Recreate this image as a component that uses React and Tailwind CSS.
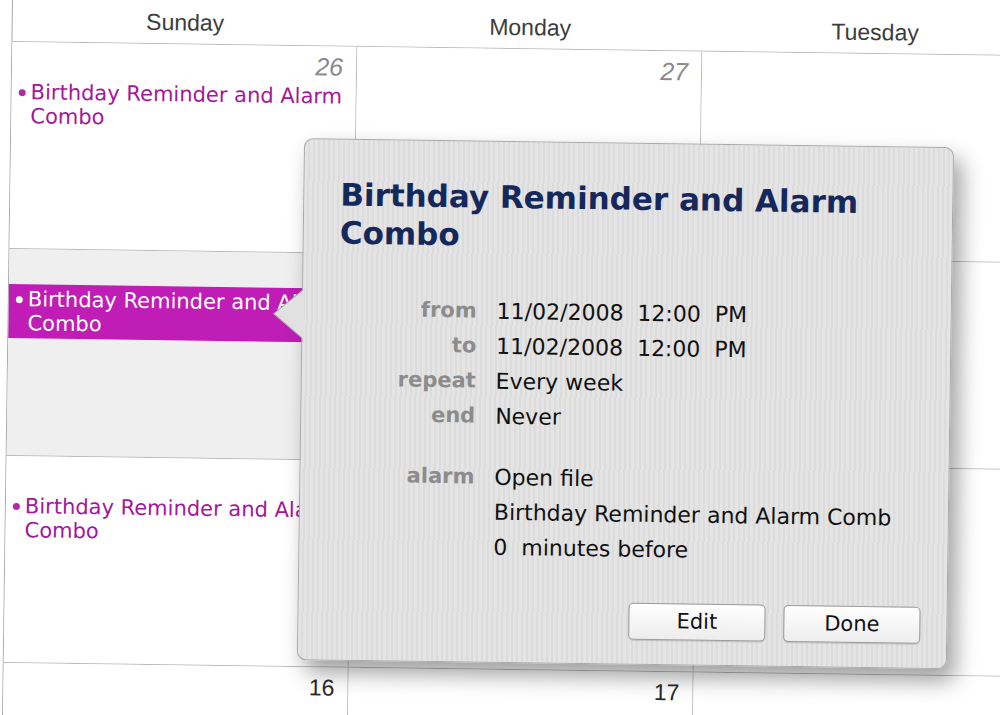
import React from 'react';

// iCal month view with an event info popover
const EVENT = 'Birthday Reminder and Alarm Combo';

// Tuesday's dates sit past the right edge of the window, so they are left empty
const weeks = [
  {
    days: [
      { n: '26', dim: true, events: [{ title: EVENT }] },
      { n: '27', dim: true },
      { n: '' },
    ],
  },
  {
    days: [
      { n: '2', gray: true, events: [{ title: EVENT, selected: true }] },
      { n: '3' },
      { n: '' },
    ],
  },
  {
    days: [
      { n: '9', events: [{ title: EVENT }] },
      { n: '10' },
      { n: '' },
    ],
  },
  {
    days: [{ n: '16' }, { n: '17' }, { n: '' }],
  },
];

const details = [
  { label: 'from', value: '11/02/2008  12:00  PM' },
  { label: 'to', value: '11/02/2008  12:00  PM' },
  { label: 'repeat', value: 'Every week' },
  { label: 'end', value: 'Never' },
];

function CalendarEvent({ title, selected }) {
  if (selected) {
    return (
      <div className="flex items-start bg-[#c01cb6] py-[3px] pl-[7px] pr-1 text-white">
        <span className="mt-[9px] mr-[5px] h-[7px] w-[7px] shrink-0 rounded-full bg-white" />
        <span className="leading-[24px]">{title}</span>
      </div>
    );
  }
  return (
    <div className="flex items-start py-[3px] pl-[7px] pr-1 text-[#a3179c]">
      <span className="mt-[9px] mr-[5px] h-[7px] w-[7px] shrink-0 rounded-full bg-[#b02aa8]" />
      <span className="leading-[24px]">{title}</span>
    </div>
  );
}

function DayCell({ day }) {
  return (
    <div
      className={`flex w-[345px] shrink-0 flex-col border-r border-b border-[#b9b9b9] ${
        day.gray ? 'bg-[#efefef]' : 'bg-white'
      }`}
    >
      <div
        className={`h-[25px] mt-[8px] pr-[13px] text-right font-['Liberation_Sans',sans-serif] leading-[25px] ${
          day.dim ? 'text-[25px] italic text-[#8a8a8a]' : 'text-[23px] text-[#2a2a2a]'
        }`}
      >
        {day.n}
      </div>
      <div className="mt-[2px] flex flex-col font-['DejaVu_Sans',sans-serif] text-[21px]">
        {(day.events || []).map((ev, i) => (
          <CalendarEvent key={i} {...ev} />
        ))}
      </div>
    </div>
  );
}

function Popover() {
  return (
    <div className="absolute left-[293px] top-[134px] flex h-[522px] w-[650px] flex-col rounded-[9px] border border-[#a8a8a8] bg-[repeating-linear-gradient(90deg,#e4e4e4_0px,#e4e4e4_3px,#dcdcdc_3px,#dcdcdc_5px)] pt-[36px] pl-[36px] pr-[26px] font-['DejaVu_Sans',sans-serif] shadow-[8px_12px_22px_rgba(0,0,0,0.38)]">
      {/* pointer toward the selected event */}
      <svg className="absolute left-[-30px] top-[150px]" width="32" height="50" viewBox="0 0 32 50">
        <polygon points="31,0 1,25 31,50" fill="#e1e1e1" stroke="#a8a8a8" strokeWidth="1" />
        <rect x="30" y="0" width="2" height="50" fill="#e1e1e1" />
      </svg>

      <h1 className="pr-[10px] text-[31px] font-bold leading-[38px] text-[#15285c]">{EVENT}</h1>

      <div className="mt-[40px] grid grid-cols-[138px_1fr] gap-x-[20px] text-[22px] leading-[35px]">
        {details.map((d) => (
          <React.Fragment key={d.label}>
            <div className="text-right text-[21px] font-bold text-[#8c8c8c]">{d.label}</div>
            <div className="whitespace-pre text-[#111]">{d.value}</div>
          </React.Fragment>
        ))}
      </div>

      <div className="mt-[26px] grid grid-cols-[138px_1fr] gap-x-[20px] text-[22px] leading-[35px]">
        <div className="text-right text-[21px] font-bold text-[#8c8c8c]">alarm</div>
        <div className="flex flex-col text-[#111]">
          <span>Open file</span>
          <span className="whitespace-nowrap">Birthday Reminder and Alarm Comb</span>
          <span className="whitespace-pre">0  minutes before</span>
        </div>
      </div>

      <div className="mt-[36px] flex justify-end gap-[18px]">
        <button className="h-[37px] w-[137px] rounded-[5px] border border-[#9c9c9c] bg-gradient-to-b from-white to-[#ededed] text-[21px] text-[#111] shadow-[0_1px_1px_rgba(0,0,0,0.15)]">
          Edit
        </button>
        <button className="h-[37px] w-[137px] rounded-[5px] border border-[#9c9c9c] bg-gradient-to-b from-white to-[#ededed] text-[21px] text-[#111] shadow-[0_1px_1px_rgba(0,0,0,0.15)]">
          Done
        </button>
      </div>
    </div>
  );
}

export default function App() {
  return (
    <div className="h-[715px] w-[1000px] overflow-hidden bg-white">
      <div className="relative ml-[12px] w-[1100px] origin-top-left rotate-[0.8deg] border-l border-[#a9a9a9]">
        <div className="flex h-[42px] border-b border-[#b9b9b9] font-['Liberation_Sans',sans-serif] text-[23px] text-[#3c3c3c]">
          {['Sunday', 'Monday', 'Tuesday'].map((d) => (
            <div key={d} className="flex w-[345px] shrink-0 items-center justify-center">
              {d}
            </div>
          ))}
        </div>

        {weeks.map((w, i) => (
          <div key={i} className="flex h-[207px]">
            {w.days.map((day, j) => (
              <DayCell key={j} day={day} />
            ))}
          </div>
        ))}

        <Popover />
      </div>
    </div>
  );
}
